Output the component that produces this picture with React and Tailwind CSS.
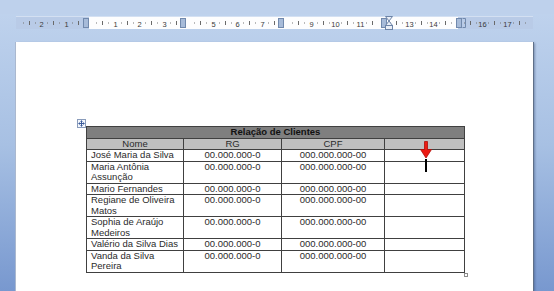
import React from 'react';

// ruler scale: pixels per centimetre and where 0 sits inside the ruler
const CM = 24.5;
const ZERO = 74;
const MARKERS = [70, 167, 265, 368];

const clientes = [
  { nome: ['José Maria da Silva'], rg: '00.000.000-0', cpf: '000.000.000-00' },
  { nome: ['Maria Antônia', 'Assunção'], rg: '00.000.000-0', cpf: '000.000.000-00' },
  { nome: ['Mario Fernandes'], rg: '00.000.000-0', cpf: '000.000.000-00' },
  { nome: ['Regiane de Oliveira', 'Matos'], rg: '00.000.000-0', cpf: '000.000.000-00' },
  { nome: ['Sophia de Araújo', 'Medeiros'], rg: '00.000.000-0', cpf: '000.000.000-00' },
  { nome: ['Valério da Silva Dias'], rg: '00.000.000-0', cpf: '000.000.000-00' },
  { nome: ['Vanda da Silva', 'Pereira'], rg: '00.000.000-0', cpf: '000.000.000-00' },
];

const Ruler = () => {
  const marks = [];
  for (let i = -12; i <= 72; i++) {
    const x = Math.round(ZERO + (i * CM) / 4) + 0.5;
    if (x < 2 || x > 512) continue;
    const hidden = MARKERS.some((m) => Math.abs(m - x) < 6) || Math.abs(x - 443) < 5;
    if (hidden || i === 0) continue;
    if (i % 4 === 0) {
      marks.push(
        <text key={i} x={x} y={12.5} textAnchor="middle" fontSize="7.5" fill="#3a3a3a" fontFamily="Liberation Sans, Arial, sans-serif">
          {Math.abs(i / 4)}
        </text>
      );
    } else if (i % 2 === 0) {
      marks.push(<line key={i} x1={x} x2={x} y1={7} y2={11} stroke="#6a6a6a" strokeWidth="1" />);
    } else {
      marks.push(<rect key={i} x={x - 0.5} y={8.5} width="1" height="1" fill="#777" />);
    }
  }

  return (
    <svg width="517" height="18" className="block overflow-visible">
      <rect x="0" y="3" width="517" height="12" fill="#b9cbe7" />
      <rect x="73" y="3" width="369" height="12" fill="#fdfdfe" />
      <line x1="0" x2="517" y1="2.5" y2="2.5" stroke="#d4e0f2" />
      {marks}
      {MARKERS.map((m) => (
        <rect key={m} x={m - 2.5} y="4.5" width="5" height="9" fill="#a7bbd9" stroke="#7189ad" />
      ))}
      {/* right margin marker */}
      <rect x="440.5" y="4.5" width="5" height="9" fill="#a7bbd9" stroke="#7189ad" />
      <path d="M446.5 4.5 h3 v9 h-3" fill="none" stroke="#7189ad" />
      {/* indent hourglass */}
      <path d="M369.5 2.5 h7 l-3.5 4.5 z" fill="#e9eef7" stroke="#6d84a8" />
      <path d="M369.5 11.5 h7 l-3.5 -4.5 z" fill="#e9eef7" stroke="#6d84a8" />
      <rect x="369.5" y="11.5" width="7" height="4" fill="#e9eef7" stroke="#6d84a8" />
    </svg>
  );
};

const MoveHandle = () => (
  <svg width="9" height="9" viewBox="0 0 9 9" className="block">
    <rect x="0.5" y="0.5" width="8" height="8" fill="#f4f7fc" stroke="#8a9cbb" />
    <path d="M4.5 1.5 v6 M1.5 4.5 h6" stroke="#3a5a9a" />
    <path d="M4.5 1.5 l-1.5 1.5 h3 z M4.5 7.5 l-1.5 -1.5 h3 z M1.5 4.5 l1.5 -1.5 v3 z M7.5 4.5 l-1.5 -1.5 v3 z" fill="#3a5a9a" />
  </svg>
);

const cell = 'border border-[#404040] align-top';

export default function App() {
  return (
    <div className="w-[554px] h-[291px] overflow-hidden flex flex-col bg-gradient-to-b from-[#c1d4ee] via-[#a7c0e3] to-[#7898cf] font-['Liberation_Sans',Arial,sans-serif]">
      <div className="h-[14px] shrink-0 bg-[#bed1ec]" />
      <div className="ml-[16px] shrink-0">
        <Ruler />
      </div>
      <div className="h-[10px] shrink-0" />

      <div className="ml-[16px] w-[517px] flex-1 bg-white shadow-[-1px_0_0_#aab8cf,1px_0_0_#5f6f88,2px_1px_2px_rgba(40,60,100,0.4)]">
        <div className="pl-[61px] pt-[77px] flex items-start">
          <MoveHandle />
          <div className="relative mt-[7px]">
            <table className="border-collapse text-[9.5px] leading-[10.5px] text-[#2b2b2b]">
              <colgroup>
                <col className="w-[97px]" />
                <col className="w-[98px]" />
                <col className="w-[103px]" />
                <col className="w-[80px]" />
              </colgroup>
              <tbody>
                <tr className="bg-[#7f7f7f]">
                  <td colSpan={4} className={`${cell} text-center font-bold text-[#111] h-[11px] p-0`}>
                    Relação de Clientes
                  </td>
                </tr>
                <tr className="bg-[#c0c0c0]">
                  <td className={`${cell} text-center p-0`}>Nome</td>
                  <td className={`${cell} text-center p-0`}>RG</td>
                  <td className={`${cell} text-center p-0`}>CPF</td>
                  <td className={`${cell} p-0`} />
                </tr>
                {clientes.map((c) => (
                  <tr key={c.nome[0]}>
                    <td className={`${cell} pl-[4px] pr-0 py-0 whitespace-nowrap`}>
                      {c.nome.map((linha) => (
                        <div key={linha}>{linha}</div>
                      ))}
                    </td>
                    <td className={`${cell} text-center p-0`}>{c.rg}</td>
                    <td className={`${cell} text-center p-0`}>{c.cpf}</td>
                    <td className={`${cell} p-0`} />
                  </tr>
                ))}
              </tbody>
            </table>

            {/* red pointer arrow and text cursor in the empty column */}
            <svg width="12" height="18" viewBox="0 0 12 18" className="absolute left-[334px] top-[15px]">
              <path d="M4.5 0.5 h3 v8 h4 l-5.5 8.5 l-5.5 -8.5 h4 z" fill="#ec1a12" stroke="#b00d08" strokeWidth="0.8" />
            </svg>
            <div className="absolute left-[339px] top-[33px] w-[2px] h-[13px] bg-black" />

            {/* table resize handle */}
            <div className="absolute -right-[3px] -bottom-[4px] w-[4px] h-[4px] border border-[#8c8c8c] bg-white" />
          </div>
        </div>
      </div>
    </div>
  );
}
